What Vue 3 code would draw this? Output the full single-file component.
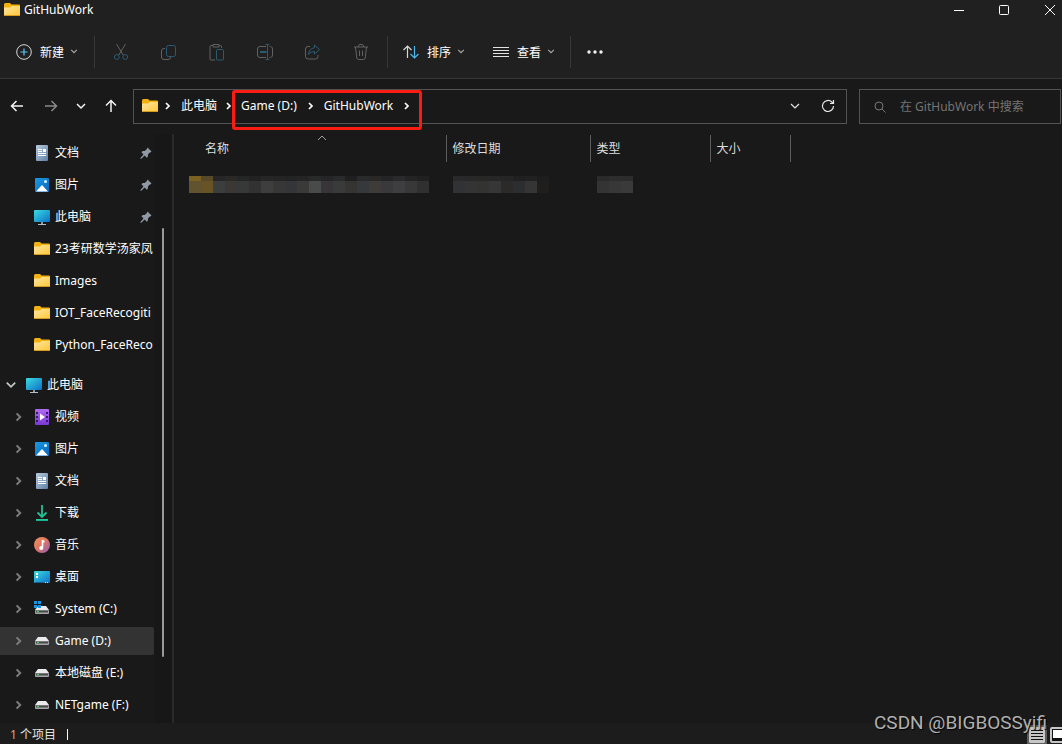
<script setup>
import { ref } from 'vue'

const query = ref('')

const quickAccess = [
  { label: '文档', icon: 'doc', pinned: true },
  { label: '图片', icon: 'picture', pinned: true },
  { label: '此电脑', icon: 'pc', pinned: true },
  { label: '23考研数学汤家凤', icon: 'folder' },
  { label: 'Images', icon: 'folder' },
  { label: 'IOT_FaceRecogiti', icon: 'folder' },
  { label: 'Python_FaceReco', icon: 'folder' },
]

const places = [
  { label: '视频', icon: 'video' },
  { label: '图片', icon: 'picture' },
  { label: '文档', icon: 'doc' },
  { label: '下载', icon: 'download' },
  { label: '音乐', icon: 'music' },
  { label: '桌面', icon: 'desktop' },
  { label: 'System (C:)', icon: 'sysdrive' },
  { label: 'Game (D:)', icon: 'drive', active: true },
  { label: '本地磁盘 (E:)', icon: 'drive' },
  { label: 'NETgame (F:)', icon: 'drive' },
]

const tools = [
  { id: 'cut', label: '剪切' },
  { id: 'copy', label: '复制' },
  { id: 'paste', label: '粘贴' },
  { id: 'rename', label: '重命名' },
  { id: 'share', label: '共享' },
  { id: 'trash', label: '删除' },
]

const nameTop = ['#7a6122', '#584a28', '#252525', '#2a2928', '#242525', '#222222', '#262626', '#242424', '#222323', '#242424', '#282929', '#252426', '#292a2a', '#1f1f1f', '#292a2b', '#292827', '#242425', '#2a2a2c', '#242424', '#202020']
const nameBottom = ['#62522f', '#675326', '#3c3e3e', '#3a3735', '#373939', '#323232', '#3e3e3e', '#373737', '#343538', '#3a3a39', '#484b49', '#383539', '#393b3a', '#363431', '#36393c', '#3f3b39', '#39383b', '#3e3d40', '#383838', '#303030']
const dateTop = ['#29292b', '#282828', '#272726', '#262626', '#252525', '#202020', '#212121', '#1d1d1d']
const dateBottom = ['#313235', '#343434', '#333331', '#363636', '#2b2a29', '#2b2d30', '#353535', '#1f1e1d']
const typeTop = ['#2b2b2b', '#2d2d2d', '#2c2c2c']
const typeBottom = ['#343434', '#373737', '#3a3a3a']
</script>

<template>
  <div class="window">
    <svg class="defs" width="0" height="0" aria-hidden="true">
      <defs>
        <linearGradient id="g-folder" x1="0" y1="0" x2="1" y2="1"><stop offset="0" stop-color="#ffe6a0" /><stop offset="1" stop-color="#fdc63a" /></linearGradient>
        <linearGradient id="g-doc" x1="0" y1="0" x2="1" y2="1"><stop offset="0" stop-color="#b9cbe0" /><stop offset="1" stop-color="#5f7fa5" /></linearGradient>
        <linearGradient id="g-pic" x1="0" y1="0" x2="1" y2="1"><stop offset="0" stop-color="#1a9be6" /><stop offset="1" stop-color="#0a63b8" /></linearGradient>
        <linearGradient id="g-pc" x1="0" y1="0" x2="1" y2="1"><stop offset="0" stop-color="#38dce0" /><stop offset="1" stop-color="#0f6fc9" /></linearGradient>
        <linearGradient id="g-video" x1="0" y1="0" x2="0" y2="1"><stop offset="0" stop-color="#b06bf0" /><stop offset="1" stop-color="#7a38d6" /></linearGradient>
        <linearGradient id="g-down" x1="0" y1="0" x2="0" y2="1"><stop offset="0" stop-color="#2fd09a" /><stop offset="1" stop-color="#10a98a" /></linearGradient>
        <linearGradient id="g-music" x1="0" y1="0" x2="1" y2="1"><stop offset="0" stop-color="#f39457" /><stop offset="0.5" stop-color="#dc7468" /><stop offset="1" stop-color="#8d5ec0" /></linearGradient>
        <symbol id="i-folder" viewBox="0 0 16 16"><path d="M0 2.500Q0 1 1.500 1H6l1.500 1.500H15q1 0 1 1V7H0z" fill="#f4b10e" /><path d="M0 5.500h6l1.500-1.500H16v9q0 1-1 1H1q-1 0-1-1z" fill="url(#g-folder)" /><path d="M0 13h16q-.3 1-1 1H1q-.7 0-1-1z" fill="#d99a1c" /></symbol>
        <symbol id="i-doc" viewBox="0 0 16 16"><rect x="2" width="12" height="16" rx="1" fill="url(#g-doc)" /><path d="M4 4.500h4M4 6.500h4M4 8.500h8M4 10.500h8" stroke="#fff" /><path d="M9 4h3v3H9z" fill="#fff" /></symbol>
        <symbol id="i-picture" viewBox="0 0 16 16"><rect x="1" y="1" width="14" height="14" rx="1" fill="url(#g-pic)" /><path d="M2 14.500L8 8l6 6.500z" fill="#fff" /><circle cx="11.500" cy="4.500" r="1.500" fill="#dff2ff" /></symbol>
        <symbol id="i-pc" viewBox="0 0 16 16"><rect y="1" width="16" height="12" rx="1" fill="url(#g-pc)" /><path d="M7 13h2v2H7z" fill="#8b98a5" /><path d="M4 15.500h8" stroke="#b4bec8" /></symbol>
        <symbol id="i-video" viewBox="0 0 16 16"><rect x="1" width="14" height="16" rx="1" fill="url(#g-video)" /><path d="M2 3h2v2H2zM2 7h2v2H2zM2 11h2v2H2zM12 3h2v2h-2zM12 7h2v2h-2zM12 11h2v2h-2z" fill="#38166e" /><path d="M6 4.500l5 3.500-5 3.500z" fill="#fff" /></symbol>
        <symbol id="i-download" viewBox="0 0 16 16"><path d="M8 0v11.500M3.500 7.500L8 12l4.500-4.500" fill="none" stroke="#24bf94" stroke-width="1.800" /><rect x="2" y="14" width="12" height="2" fill="url(#g-down)" /></symbol>
        <symbol id="i-music" viewBox="0 0 16 16"><circle cx="8" cy="8" r="8" fill="url(#g-music)" /><path d="M8.500 3v7.500M8.500 3.500l2 1.500" stroke="#fff" stroke-width="1.600" /><circle cx="7.200" cy="11" r="2" fill="#fff" /></symbol>
        <symbol id="i-desktop" viewBox="0 0 16 16"><rect y="2" width="16" height="12" rx="1" fill="url(#g-pc)" /><path d="M2 4h2v2H2zM2 7h2v2H2z" fill="#fff" /><path d="M1 13.500h14" stroke="#1c5f98" /><path d="M11 13.500h1m1 0h1" stroke="#d5f0ff" /></symbol>
        <symbol id="i-drive" viewBox="0 0 16 16"><path d="M4 4h8l3 4H1z" fill="#e9e9ee" /><rect x="1" y="8" width="14" height="4" rx="1" fill="#a6a6a8" /><path d="M2 8.500h12v2H2z" fill="#4a4a4c" /><path d="M3 9h2v1H3z" fill="#38e54d" /></symbol>
        <symbol id="i-sysdrive" viewBox="0 0 16 16"><path d="M4 5h8l3 4H1z" fill="#e9e9ee" /><rect x="1" y="9" width="14" height="4" rx="1" fill="#a6a6a8" /><path d="M2 9.500h12v2H2z" fill="#4a4a4c" /><path d="M3 10h2v1H3z" fill="#38e54d" /><path d="M0 0h3v3H0zM4 0h3v3H4zM0 4h3v3H0zM4 4h3v3H4z" fill="#1b94e4" /></symbol>
        <symbol id="i-pin" viewBox="0 0 12 12"><path d="M7.500.5l4 4-1.200 1-.6-.1-1.800 2.200v2L6.800 10.700 4.600 8.500 1 12 .2 11.200 3.500 7.500 1.500 5.300l1.200-1.200h2l2-1.800z" fill="#8f9aa5" /></symbol>
        <symbol id="i-right" viewBox="0 0 8 10"><path d="M2 2l3 3-3 3" fill="none" stroke="currentColor" stroke-width="1.700" /></symbol>
        <symbol id="i-down" viewBox="0 0 10 8"><path d="M1.500 2L5 5.500 8.500 2" fill="none" stroke="currentColor" stroke-width="1.500" /></symbol>
      </defs>
    </svg>

    <header class="titlebar">
      <svg class="ico"><use href="#i-folder" /></svg>
      <h1>GitHubWork</h1>
      <div class="controls">
        <button type="button" aria-label="最小化"><svg width="12" height="12"><path d="M1 6.500h10" /></svg></button>
        <button type="button" aria-label="最大化"><svg width="12" height="12"><rect x="1.500" y="1.500" width="9" height="9" rx="1" /></svg></button>
        <button type="button" aria-label="关闭"><svg width="12" height="12"><path d="M1 1l10 10M11 1L1 11" /></svg></button>
      </div>
    </header>

    <div class="toolbar">
      <button type="button" class="menu new">
        <svg width="16" height="16" fill="none"><circle cx="8" cy="8" r="7.300" stroke="#d8d8d8" /><path d="M8 4.500v7M4.500 8h7" stroke="#5cc4f5" stroke-width="1.200" /></svg>
        <span>新建</span><svg class="caret"><use href="#i-down" /></svg>
      </button>
      <i class="sep"></i>
      <div class="tools">
        <button v-for="t in tools" :key="t.id" type="button" :aria-label="t.label" disabled>
          <svg width="18" height="18" fill="none" stroke="#626262">
            <template v-if="t.id === 'cut'"><path d="M4.500 1l6.700 11M13.500 1L6.800 12" /><g stroke="#2b5a73"><circle cx="4.800" cy="14" r="2.400" /><circle cx="13.200" cy="14" r="2.400" /></g></template>
            <template v-else-if="t.id === 'copy'"><path d="M5 5.500H4A2.500 2.500 0 0 0 1.500 8v6A2.500 2.500 0 0 0 4 16.500h4A2.500 2.500 0 0 0 10.500 14" /><rect x="6.500" y="2.500" width="9" height="11" rx="2" stroke="#2b5a73" /></template>
            <template v-else-if="t.id === 'paste'"><path d="M5 2.500H3q-1 0-1 1V16q0 1 1 1h4M11 2.500h1.500q1 0 1 1V5M5 1.500h6v2.500H5z" /><rect x="8.500" y="6.500" width="7" height="10.500" rx="1" stroke="#2b5a73" /></template>
            <template v-else-if="t.id === 'rename'"><path d="M10 3.500H4A2.500 2.500 0 0 0 1.500 6v6A2.500 2.500 0 0 0 4 14.500h6M13.500 3.500A2.500 2.500 0 0 1 16.500 6v6a2.500 2.500 0 0 1-3 2.500" /><path d="M4 9h6.500" stroke="#2b5a73" stroke-width="2" /><path d="M11.500 1.500v15M9.500 1.500h4M9.500 16.500h4" stroke="#2b5a73" /></template>
            <template v-else-if="t.id === 'share'"><path d="M6 3.500H4A2.500 2.500 0 0 0 1.500 6v7.500A2.500 2.500 0 0 0 4 16h7.500a2.500 2.500 0 0 0 2.500-2.500V12" /><path d="M10.500 2l5 4.500-5 4.500V8.500Q6.500 8.300 4.500 11.500 5 5.500 10.500 4.800z" stroke="#2b5a73" /></template>
            <template v-else><path d="M2 4h14M6.500 4V3q0-1.500 1.500-1.500h2q1.500 0 1.500 1.500v1M3.500 4l1.300 11q.2 1.500 1.700 1.500h5q1.500 0 1.700-1.500l1.300-11M7.500 7.500v5.500M10.500 7.500v5.500" /></template>
          </svg>
        </button>
      </div>
      <i class="sep"></i>
      <button type="button" class="menu sort">
        <svg width="16" height="16" fill="none"><path d="M4.500 14V2M.5 6l4-4 4 4" stroke="#d8d8d8" stroke-width="1.200" /><path d="M11.500 2v12M7.500 10l4 4 4-4" stroke="#4cb8f0" stroke-width="1.200" /></svg>
        <span>排序</span><svg class="caret"><use href="#i-down" /></svg>
      </button>
      <button type="button" class="menu view">
        <svg width="16" height="16" fill="none" stroke="#e2e2e2"><path d="M0 3.500h16M0 6.500h16M0 9.500h16M0 12.500h16" /></svg>
        <span>查看</span><svg class="caret"><use href="#i-down" /></svg>
      </button>
      <i class="sep"></i>
      <button type="button" class="more" aria-label="更多"><svg width="18" height="4" fill="#f2f2f2"><circle cx="3" cy="2" r="1.700" /><circle cx="9" cy="2" r="1.700" /><circle cx="15" cy="2" r="1.700" /></svg></button>
    </div>

    <div class="navrow">
      <nav class="history" aria-label="导航">
        <button type="button" aria-label="后退"><svg width="14" height="14"><path d="M13 7H2M6.500 2L1.500 7l5 5" /></svg></button>
        <button type="button" class="dim" aria-label="前进"><svg width="14" height="14"><path d="M1 7h11M7.500 2l5 5-5 5" /></svg></button>
        <button type="button" class="narrow" aria-label="最近位置"><svg width="10" height="8"><path d="M1 2l4 4 4-4" /></svg></button>
        <button type="button" class="narrow" aria-label="向上"><svg width="14" height="14"><path d="M7 13V2M2 6.500l5-5 5 5" /></svg></button>
      </nav>
      <div class="address">
        <svg class="ico"><use href="#i-folder" /></svg>
        <svg class="chev"><use href="#i-right" /></svg>
        <a href="#">此电脑</a>
        <svg class="chev last"><use href="#i-right" /></svg>
        <div class="marked">
          <a href="#">Game (D:)</a>
          <svg class="chev"><use href="#i-right" /></svg>
          <a href="#">GitHubWork</a>
          <svg class="chev"><use href="#i-right" /></svg>
        </div>
        <div class="ends">
          <button type="button" aria-label="展开"><svg width="10" height="8"><path d="M1 2l4 4 4-4" /></svg></button>
          <button type="button" aria-label="刷新"><svg width="14" height="14"><path d="M12.500 7A5.500 5.500 0 1 1 10.800 3l1.500 1.500M12.500 1v3.500H9" /></svg></button>
        </div>
      </div>
      <label class="search">
        <svg width="12" height="12" fill="none" stroke="#777"><circle cx="5" cy="5" r="4" /><path d="M8 8l3.500 3.500" /></svg>
        <input v-model="query" type="text" placeholder="在 GitHubWork 中搜索" aria-label="搜索" />
      </label>
    </div>

    <div class="body">
      <aside class="sidebar">
        <div class="tree">
          <ul>
            <li v-for="(item, i) in quickAccess" :key="i" class="child">
              <svg class="ico"><use :href="'#i-' + item.icon" /></svg>
              <span class="name">{{ item.label }}</span>
              <svg v-if="item.pinned" class="pin"><use href="#i-pin" /></svg>
            </li>
          </ul>
          <ul>
            <li class="root">
              <svg class="open"><use href="#i-down" /></svg>
              <svg class="ico"><use href="#i-pc" /></svg>
              <span class="name">此电脑</span>
            </li>
            <li v-for="(item, i) in places" :key="i" class="place" :class="{ active: item.active }">
              <svg class="chev"><use href="#i-right" /></svg>
              <svg class="ico"><use :href="'#i-' + item.icon" /></svg>
              <span class="name">{{ item.label }}</span>
            </li>
          </ul>
        </div>
        <div class="track"><div class="thumb"></div></div>
      </aside>

      <main class="files">
        <table>
          <colgroup><col class="c-name" /><col class="c-date" /><col class="c-type" /><col class="c-size" /></colgroup>
          <thead>
            <tr>
              <th scope="col">名称<svg class="sorted" width="10" height="6"><path d="M1 5l4-4 4 4" /></svg></th>
              <th scope="col">修改日期</th>
              <th scope="col">类型</th>
              <th scope="col">大小</th>
            </tr>
          </thead>
          <tbody>
            <tr>
              <td>
                <div class="mosaic top"><i v-for="(c, i) in nameTop" :key="i" :style="{ background: c }"></i></div>
                <div class="mosaic"><i v-for="(c, i) in nameBottom" :key="i" :style="{ background: c }"></i></div>
              </td>
              <td>
                <div class="mosaic top"><i v-for="(c, i) in dateTop" :key="i" :style="{ background: c }"></i></div>
                <div class="mosaic"><i v-for="(c, i) in dateBottom" :key="i" :style="{ background: c }"></i></div>
              </td>
              <td>
                <div class="mosaic top"><i v-for="(c, i) in typeTop" :key="i" :style="{ background: c }"></i></div>
                <div class="mosaic"><i v-for="(c, i) in typeBottom" :key="i" :style="{ background: c }"></i></div>
              </td>
              <td></td>
            </tr>
          </tbody>
        </table>
      </main>
    </div>

    <footer class="status">
      <span><b>1</b> 个项目</span><i class="bar"></i>
      <div class="views">
        <button type="button" class="on" aria-label="详细信息"><svg width="16" height="16"><rect width="16" height="16" rx="1" fill="#c6c6c6" /><path d="M2 3.500h12M2 6.500h12M2 9.500h12M2 12.500h12" stroke="#111" /></svg></button>
        <button type="button" aria-label="大图标"><svg width="16" height="16"><rect x="1" y="1" width="14" height="14" rx="1" fill="#111" stroke="#c6c6c6" stroke-width="2" /><path d="M3 3h10v8H3z" fill="#fff" /></svg></button>
      </div>
    </footer>
    <div class="watermark">CSDN @BIGBOSSyifi</div>
  </div>
</template>

<style>
html, body { margin: 0; background: #191919; }
</style>

<style scoped>
.window {
  position: relative;
  display: flex;
  flex-direction: column;
  height: 100vh;
  overflow: hidden;
  background: #191919;
  color: #fff;
  font: 12px/16px "Noto Sans", "Noto Sans CJK SC", sans-serif;
}
.window * { box-sizing: border-box; }
.defs { position: absolute; }
svg { display: block; flex: none; }
button { margin: 0; padding: 0; border: 0; background: none; color: inherit; font: inherit; }
ul { margin: 0; padding: 0; list-style: none; }
a { color: inherit; text-decoration: none; }
.ico { width: 16px; height: 16px; }
.chev { width: 8px; height: 10px; }

.titlebar { display: flex; align-items: center; gap: 4px; height: 19px; padding-left: 4px; background: #202020; flex: none; }
.titlebar h1 { margin: 0; font-size: 12px; font-weight: 400; }
.controls { display: flex; margin-left: auto; }
.controls button { display: flex; justify-content: center; width: 45px; }
.controls button:last-child { width: 36px; padding-left: 12px; }
.controls svg { fill: none; stroke: #fff; }

.toolbar { display: flex; align-items: center; height: 60px; padding-top: 6px; border-bottom: 1px solid #373737; background: #202020; flex: none; }
.sep { width: 1px; height: 32px; background: #383838; }
.menu { display: flex; align-items: center; }
.menu span { padding: 2px 6px 0 8px; }
.caret { width: 8px; height: 7px; color: #a8a8a8; }
.new { width: 94px; padding-left: 16px; }
.tools { display: flex; padding: 0 2px; }
.tools button { display: flex; justify-content: center; width: 48px; }
.sort { padding-left: 15px; }
.view { width: 105px; padding-left: 28px; }
.more { padding-left: 15px; }

.navrow { display: flex; height: 55px; padding: 10px 1px 10px 0; flex: none; }
.history { display: flex; align-items: center; width: 133px; padding-bottom: 2px; }
.history button { display: flex; justify-content: center; width: 34px; }
.history .narrow { width: 26px; }
.history .narrow + .narrow { width: 34px; }
.history svg { fill: none; stroke: #f4f4f4; stroke-width: 1.5; }
.history .dim svg { stroke: #8a8a8a; }
.address { display: flex; flex: 1; align-items: center; min-width: 0; padding: 0 0 2px 8px; border: 1px solid #535353; }
.address .chev { margin: 0 9px 0 6px; }
.address .last { margin: 0 8px; }
.marked { position: relative; display: flex; align-items: center; }
.marked .chev { margin: 0 9px 0 10px; }
.marked::after { content: ""; position: absolute; inset: -8px -2px -16px -9px; border: 3px solid #fa1b12; border-radius: 3px; }
.ends { display: flex; align-items: center; gap: 21px; margin-left: auto; padding-right: 11px; }
.ends svg { fill: none; stroke: #e6e6e6; stroke-width: 1.2; }
.search { display: flex; align-items: center; gap: 14px; width: 202px; margin-left: 12px; padding-left: 14px; border: 1px solid #535353; }
.search input { flex: 1; min-width: 0; padding: 0; border: 0; outline: 0; background: none; color: #fff; font: inherit; }
.search input::placeholder { color: #747474; opacity: 1; }

.body { display: flex; flex: 1; min-height: 0; }
.sidebar { display: flex; width: 174px; border-right: 2px solid #2a2a2a; overflow: hidden; flex: none; }
.tree { width: 154px; padding-top: 5px; }
.tree ul { display: grid; gap: 4px; }
.tree ul + ul { margin-top: 12px; }
.tree li { display: flex; align-items: center; height: 28px; min-width: 0; }
.name { margin-left: 5px; white-space: nowrap; }
.child { padding-left: 34px; }
.pin { width: 12px; height: 12px; margin: 0 2px 0 auto; }
.root { padding-left: 5px; }
.open { width: 12px; height: 10px; margin-right: 9px; color: #c4c4c4; }
.place { padding-left: 14px; }
.place .chev { width: 10px; height: 12px; margin-right: 10px; color: #7c7c7c; }
.active { background: #333; border-radius: 0 2px 2px 0; }
.track { width: 18px; padding: 94px 0 66px 8px; background: #171717; }
.thumb { width: 2px; height: 100%; border-radius: 1px; background: #9a9a9a; }

.files { flex: 1; min-width: 0; padding-top: 1px; }
table { width: 616px; border-collapse: collapse; table-layout: fixed; }
.c-name { width: 272px; }
.c-date { width: 144px; }
.c-type { width: 120px; }
.c-size { width: 80px; }
th { position: relative; height: 27px; padding: 0 0 0 6px; border-right: 1px solid #5c5c5c; color: #dedede; font-weight: 400; text-align: left; }
th:first-child { padding-left: 31px; }
.sorted { position: absolute; left: 143px; top: 0; fill: none; stroke: #a0a0a0; }
td { padding: 14px 0 0 7px; vertical-align: top; }
td:first-child { padding-left: 15px; }
.mosaic { display: flex; height: 12px; }
.mosaic.top { height: 5px; }
.mosaic i { width: 12px; }

.status { display: flex; align-items: center; height: 21px; padding: 2px 0 0 10px; background: #1c1c1c; color: #e4e4e4; flex: none; }
.status b { color: #d6a574; font-weight: 400; }
.bar { width: 1px; height: 11px; margin-left: 11px; background: #fff; }
.views { display: flex; gap: 5px; margin-left: auto; margin-right: -4px; }
.views .on { outline: 2px solid #5d5d5d; }
.watermark { position: absolute; right: 15px; bottom: 10px; color: #b0b0b0; font: 19px/22px Roboto, sans-serif; text-shadow: 1px 1px 1px #000; }
</style>
